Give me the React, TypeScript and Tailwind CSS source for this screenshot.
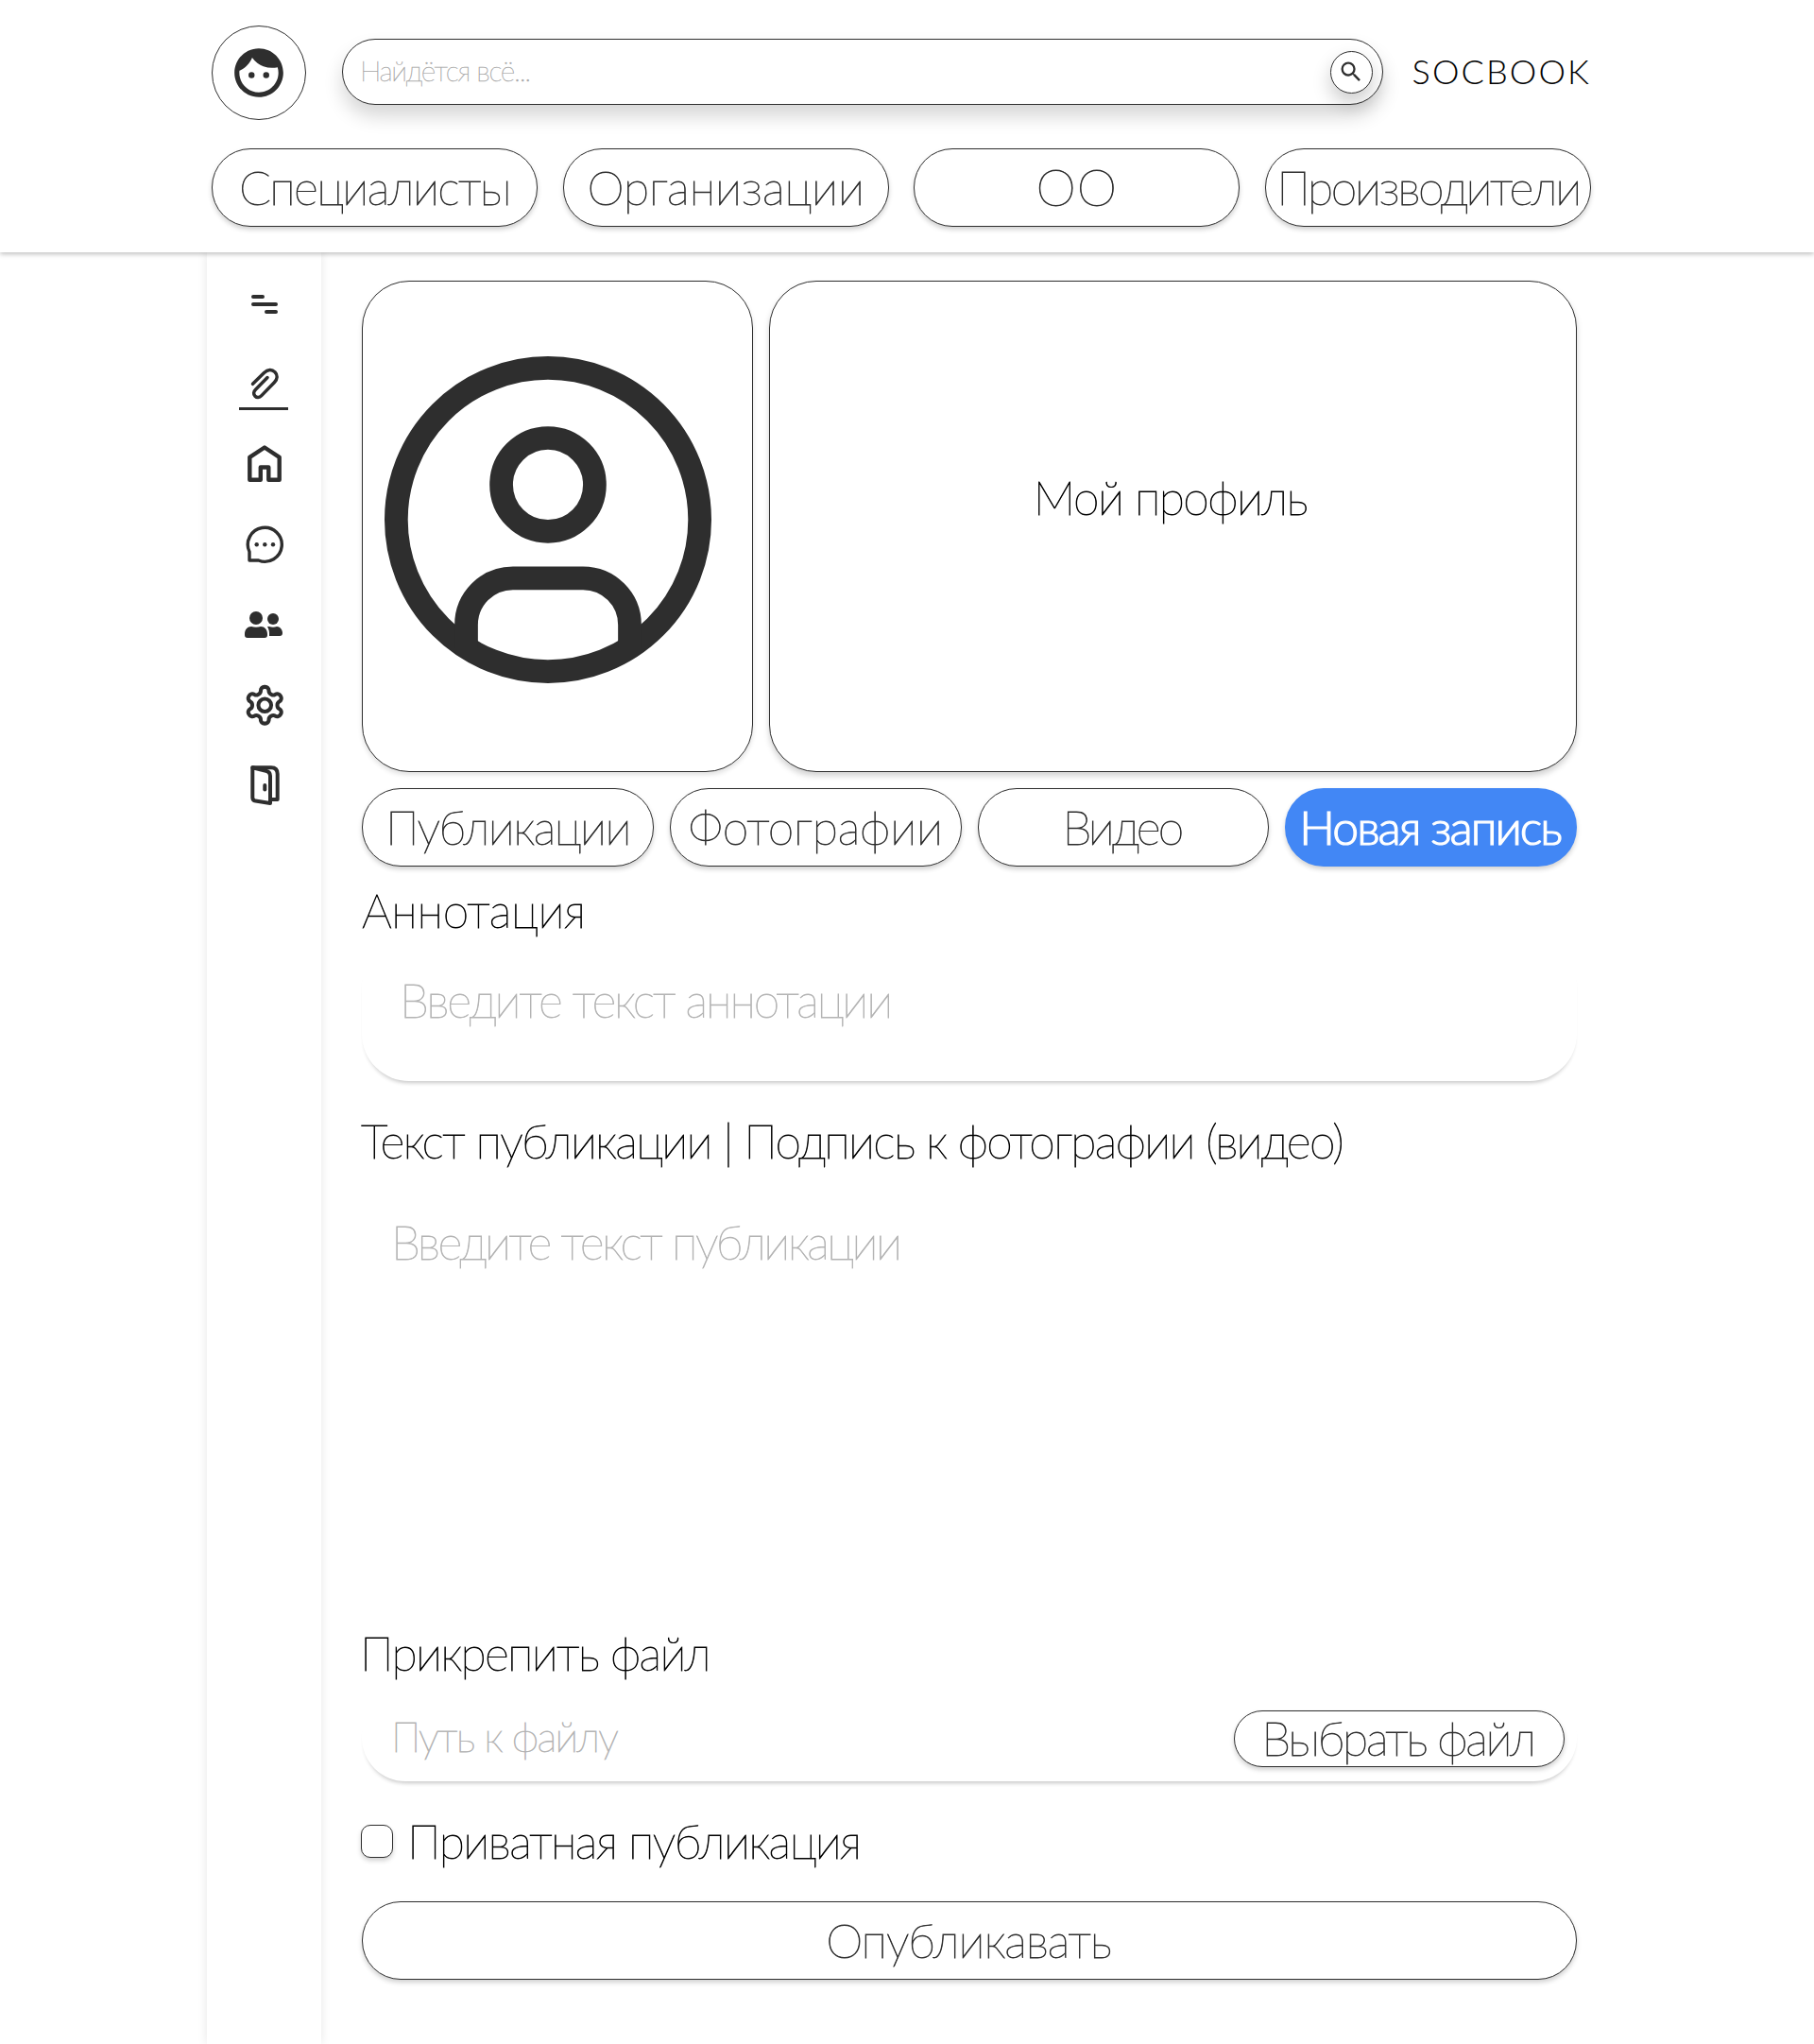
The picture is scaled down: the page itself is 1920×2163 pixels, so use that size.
import type { ReactNode } from "react";
import { MdFace, MdSearch } from "react-icons/md";

const pill =
  "flex h-[83px] items-center justify-center rounded-[41px] border border-[#2e2e2e] bg-white pb-[2px] text-[50px] leading-none font-thin whitespace-nowrap text-[#2e2e2e] shadow-[0_3px_5px_rgba(0,0,0,0.18)]";

const sections = [
  { title: "Специалисты", text: "tracking-[-1.6px]" },
  { title: "Организации", text: "tracking-[-0.1px]" },
  { title: "ОО", text: "tracking-[1px] text-[54px]" },
  { title: "Производители", text: "tracking-[-2.4px]" },
];

const tabs = [
  { title: "Публикации", text: "tracking-[-1.5px]" },
  { title: "Фотографии", text: "tracking-[-0.2px]" },
  { title: "Видео", text: "tracking-[-2.9px] pr-[3px]" },
];

function Icon({ children, width }: { children: ReactNode; width: number }) {
  return (
    <svg
      viewBox="0 0 44 44"
      className="size-11 text-[#2e2e2e]"
      fill="none"
      stroke="currentColor"
      strokeWidth={width}
      strokeLinecap="round"
      strokeLinejoin="round"
    >
      {children}
    </svg>
  );
}

const menu: { name: string; active?: boolean; icon: ReactNode }[] = [
  {
    name: "menu",
    icon: (
      <Icon width={4}>
        <path d="M10 15h10M10 23h24M24 31h10" />
      </Icon>
    ),
  },
  {
    name: "attach",
    active: true,
    icon: (
      <Icon width={3.5}>
        <path d="M9.5 22.3 21.5 10.5C25.5 6.4 30 6.6 32.8 9.6 36 12.8 36 17 32.3 20.8L18.8 34.6C16.5 37.2 13.7 37 12 35.2 9.8 33 10.4 30.3 12.5 28.2L25 15.5" />
      </Icon>
    ),
  },
  {
    name: "home",
    icon: (
      <Icon width={4.4}>
        <path d="M22 4.5 37.7 14.8V38.8H26.3V25.5H17.8V38.8H6.3V14.8Z" />
      </Icon>
    ),
  },
  {
    name: "chat",
    icon: (
      <Icon width={3.4}>
        <path d="M6 39V29.9A18 18 0 1 1 15.6 39Z" />
        <g fill="currentColor" stroke="none">
          <circle cx="13.7" cy="22.3" r="2.2" />
          <circle cx="22.3" cy="22.3" r="2.2" />
          <circle cx="31" cy="22.3" r="2.2" />
        </g>
      </Icon>
    ),
  },
  {
    name: "people",
    icon: (
      <Icon width={0}>
        <g fill="currentColor" stroke="none">
          <circle cx="13" cy="15" r="7" />
          <circle cx="31" cy="16" r="6" />
          <path d="M8 24q5 1.6 10 0c4 0 7 3 7 8v1c0 2-1 3-3 3H4c-2 0-3-1-3-3v-1c0-5 3-8 7-8z" />
          <path d="M25 24h2q4 1.4 8 0c4 0 6 4 6 7 0 2-1 3-3 3H27v-3c0-3-1-5-2-7z" />
        </g>
      </Icon>
    ),
  },
  {
    name: "settings",
    icon: (
      <svg
        viewBox="0 0 24 24"
        className="mt-[2px] ml-[1px] size-[46.5px] text-[#2e2e2e]"
        fill="none"
        stroke="currentColor"
        strokeWidth={2.1}
        strokeLinecap="round"
        strokeLinejoin="round"
      >
        <path d="M12.22 2h-.44a2 2 0 0 0-2 2v.18a2 2 0 0 1-1 1.73l-.43.25a2 2 0 0 1-2 0l-.15-.08a2 2 0 0 0-2.73.73l-.22.38a2 2 0 0 0 .73 2.73l.15.1a2 2 0 0 1 1 1.72v.51a2 2 0 0 1-1 1.74l-.15.09a2 2 0 0 0-.73 2.73l.22.38a2 2 0 0 0 2.73.73l.15-.08a2 2 0 0 1 2 0l.43.25a2 2 0 0 1 1 1.73V20a2 2 0 0 0 2 2h.44a2 2 0 0 0 2-2v-.18a2 2 0 0 1 1-1.73l.43-.25a2 2 0 0 1 2 0l.15.08a2 2 0 0 0 2.73-.73l.22-.39a2 2 0 0 0-.73-2.73l-.15-.08a2 2 0 0 1-1-1.74v-.5a2 2 0 0 1 1-1.74l.15-.09a2 2 0 0 0 .73-2.73l-.22-.38a2 2 0 0 0-2.73-.73l-.15.08a2 2 0 0 1-2 0l-.43-.25a2 2 0 0 1-1-1.73V4a2 2 0 0 0-2-2z" />
        <circle cx="12" cy="12" r="3.5" />
      </svg>
    ),
  },
  {
    name: "exit",
    icon: (
      <Icon width={4}>
        <path d="M9.3 3.3 23.5 6.8Q28 8 28 12V41L12.5 38.6Q9.3 38 9.3 35Z" />
        <path d="M9.3 3.3H29Q35.7 3.3 35.7 10V37H28" />
        <path d="M22.3 22v4.6" />
      </Icon>
    ),
  },
];

const label = "h-[60px] text-[50px] leading-[56px] font-thin whitespace-nowrap text-black";
const field =
  "block w-full resize-none bg-transparent text-[50px] leading-[60px] font-thin outline-none placeholder:text-[#b4b4b4] placeholder:opacity-100";
const fieldShadow = "shadow-[0_5px_4px_-3px_rgba(0,0,0,0.22)]";

export default function App() {
  return (
    <div className="flex h-[2163px] w-full flex-col overflow-hidden bg-white font-['Lato','Roboto',sans-serif] [-webkit-text-stroke:0.8px]">
      <header className="relative z-10 flex h-[267px] shrink-0 flex-col bg-white pt-[27px] pl-[224px] shadow-[0_2px_5px_rgba(0,0,0,0.25)]">
        <div className="flex w-[1460px] items-center">
          <button className="flex size-[100px] items-center justify-center rounded-full border border-[#2e2e2e] text-[#2e2e2e]">
            <MdFace className="size-[62px]" />
          </button>
          <div className="mb-[2px] ml-[38px] flex h-[70px] w-[1103px] items-center rounded-[35px] border border-[#2e2e2e] bg-white pr-[10px] pl-[18px] shadow-[0_12px_20px_rgba(0,0,0,0.16)]">
            <input
              placeholder="Найдётся всё..."
              className="min-w-0 flex-1 bg-transparent pb-[4px] text-[30px] leading-none font-thin tracking-[-1.3px] outline-none [-webkit-text-stroke:0.4px] placeholder:text-[#a8a8a8] placeholder:opacity-100"
            />
            <button className="flex size-[45px] items-center justify-center rounded-full border border-[#2e2e2e] bg-white text-[#2e2e2e] shadow-[0_10px_20px_rgba(0,0,0,0.2)]">
              <MdSearch className="size-7" />
            </button>
          </div>
          <div className="mb-[5px] ml-[31px] text-[36px] leading-none font-light tracking-[2.1px] text-black [-webkit-text-stroke:0]">
            SOCBOOK
          </div>
        </div>
        <nav className="mt-[30px] grid w-[1460px] grid-cols-4 gap-[26.67px]">
          {sections.map((s) => (
            <button key={s.title} className={pill}>
              <span className={s.text}>{s.title}</span>
            </button>
          ))}
        </nav>
      </header>

      <div className="flex flex-1">
        <aside className="ml-[219px] flex w-[121px] flex-col items-center bg-white pt-[11px] shadow-[0_0_10px_rgba(0,0,0,0.1)]">
          {menu.map((m) => (
            <button key={m.name} className="relative flex h-[85px] w-[52px] items-center justify-center">
              {m.icon}
              {m.active && <span className="absolute bottom-[14px] left-[-0.5px] h-[3px] w-[52px] bg-[#2e2e2e]" />}
            </button>
          ))}
        </aside>

        <main className="ml-[43px] w-[1286px] pt-[30px]">
          <section className="flex gap-[17px]">
            <div className="flex h-[520px] w-[414px] rounded-[50px] border border-[#2e2e2e] bg-white pt-[79px] pl-[22.5px] shadow-[0_3px_5px_rgba(0,0,0,0.12)]">
              <svg viewBox="2 2 28 28" className="size-[346px]" fill="none" stroke="#2e2e2e" strokeWidth={2}>
                <circle cx="16" cy="16" r="13" />
                <circle cx="16" cy="13" r="4" />
                <path d="M9 27v-2a4 4 0 0 1 4-4h6a4 4 0 0 1 4 4v2" />
              </svg>
            </div>
            <div className="h-[520px] flex-1 rounded-[50px] border border-[#2e2e2e] bg-white pt-[198px] pr-[6px] text-center text-[50px] leading-[60px] font-thin tracking-[-1.6px] text-black shadow-[0_4px_6px_rgba(0,0,0,0.18)]">
              Мой профиль
            </div>
          </section>

          <section className="mt-[17px] grid grid-cols-4 gap-[17px]">
            {tabs.map((t) => (
              <button key={t.title} className={pill}>
                <span className={t.text}>{t.title}</span>
              </button>
            ))}
            <button className="flex h-[83px] items-center justify-center rounded-[41px] bg-[#4287f5] pr-[2px] pb-[2px] text-[50px] leading-none font-light tracking-[-2px] whitespace-nowrap text-white shadow-[0_3px_5px_rgba(0,0,0,0.18)] [-webkit-text-stroke:1.2px]">
              Новая запись
            </button>
          </section>

          <form>
            <div className={`${label} mt-[18px] tracking-[-0.3px]`}>Аннотация</div>
            <textarea
              placeholder="Введите текст аннотации"
              className={`${field} ${fieldShadow} h-[149px] rounded-[50px] pt-[33px] pl-[40px] tracking-[-2.1px]`}
            />
            <div className={`${label} mt-[35px] ml-[-1px] tracking-[-1.72px]`}>
              Текст публикации | Подпись к фотографии (видео)
            </div>
            <textarea
              placeholder="Введите текст публикации"
              className={`${field} h-[482px] pt-[45px] pl-[31px] tracking-[-2.5px]`}
            />
            <div className={`${label} ml-[-2px] tracking-[-1.7px]`}>Прикрепить файл</div>
            <div className={`mt-[12px] flex h-[92px] items-center rounded-[46px] pr-[13px] pl-[31px] ${fieldShadow}`}>
              <input
                placeholder="Путь к файлу"
                className="min-w-0 flex-1 bg-transparent pb-[4px] text-[44px] leading-none font-thin tracking-[-1.7px] outline-none placeholder:text-[#b4b4b4] placeholder:opacity-100"
              />
              <button
                type="button"
                className="mt-[2px] flex h-[60px] w-[350px] items-center justify-center rounded-[30px] border border-[#2e2e2e] bg-white pr-[3px] pb-[3px] text-[50px] leading-none font-thin tracking-[-2.3px] whitespace-nowrap text-[#2e2e2e] shadow-[0_3px_5px_rgba(0,0,0,0.18)]"
              >
                Выбрать файл
              </button>
            </div>
            <label className="mt-[35px] ml-[-1px] flex h-[60px] items-center">
              <span className="mb-[3px] h-[35px] w-[34px] rounded-[10px] border border-[#2e2e2e] bg-white shadow-[0_3px_5px_rgba(0,0,0,0.18)]" />
              <span className={`${label} ml-[15px] tracking-[-1.6px]`}>Приватная публикация</span>
            </label>
            <button type="button" className={`${pill} mt-[32px] w-full pr-[2px] tracking-[-1.1px]`}>
              Опубликавать
            </button>
          </form>
        </main>
      </div>
    </div>
  );
}
